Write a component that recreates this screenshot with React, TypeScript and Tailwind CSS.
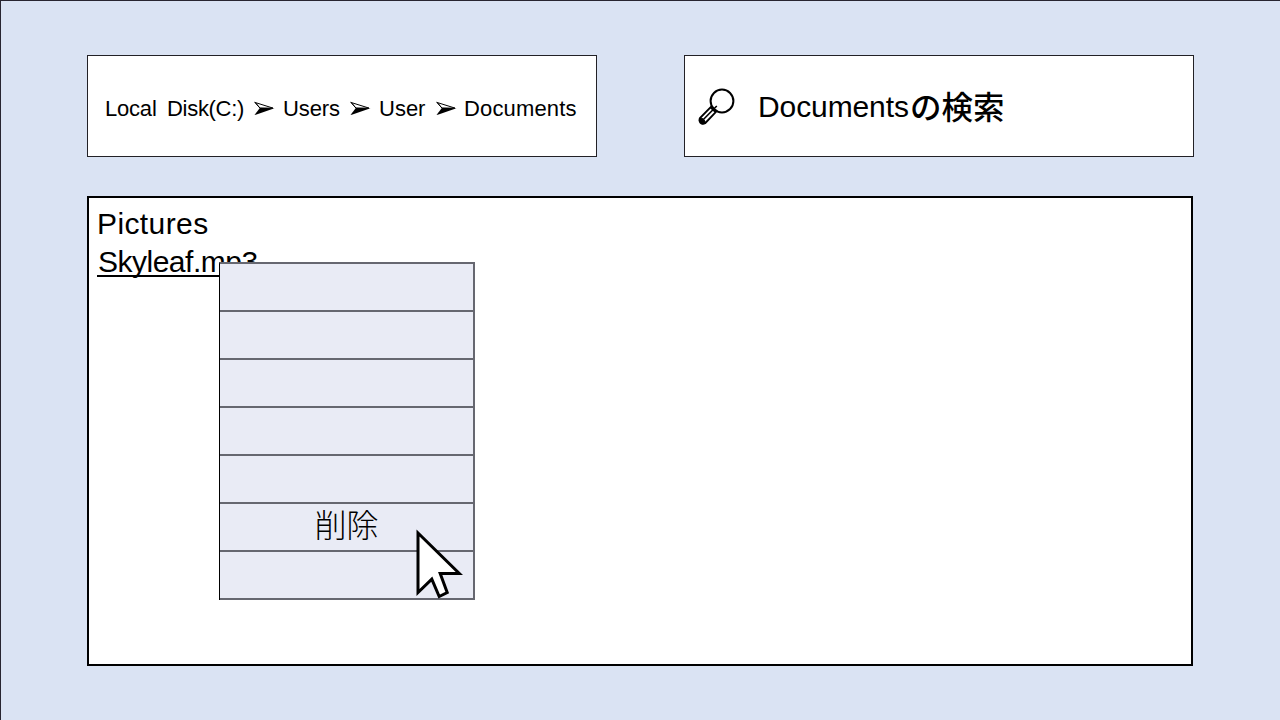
function Arrow() {
  return (
    <svg className="-mt-px h-[15px] w-[21px] shrink-0" viewBox="0 0 21 15" aria-hidden="true">
      <path d="M1.2 1.5 19 7.1 6 7.1Z" fill="white" stroke="black" strokeWidth="1" />
      <path d="M20.5 7.2 6 6.8 0.5 14 2.5 13.5Z" fill="black" />
      <path d="M0.5 0.8 6 7.2" stroke="black" />
    </svg>
  );
}

function SearchIcon() {
  return (
    <svg className="mt-px h-[38px] w-[38px] shrink-0" viewBox="0 0 38 38" fill="none" stroke="black" aria-hidden="true">
      <circle cx="24" cy="13" r="11.4" strokeWidth="2" />
      <path d="M13.2 18.6 2.2 29.8Q.8 32 2.3 34.5Q4.3 36.6 7.2 35.2L18 23.8Z" fill="white" strokeWidth="1.9" />
      <path d="M1.8 30Q6.7 30.2 7.4 35Q4.6 37 2.4 34.7Q.6 32.5 1.8 30Z" fill="black" />
      <path d="M14.5 22.2 5.4 31.5M16 20.8l2.8-2.8M12.6 19.6l4.6 4.2" strokeWidth="1.6" />
    </svg>
  );
}

function Cursor() {
  return (
    <svg className="absolute left-[193px] top-[261px] h-[76px] w-[52px]" viewBox="0 0 52 76" aria-hidden="true">
      <path
        d="M5 8 L5 67.5 L18.8 54.2 L26.2 71.5 L34.2 67.6 L27.2 48.5 L46.3 48.5 Z"
        fill="white"
        stroke="black"
        strokeWidth="3"
      />
    </svg>
  );
}

const menuItems = ["", "", "", "", "", "削除", ""];

export default function App() {
  return (
    <main className="flex h-[720px] w-[1280px] flex-col overflow-hidden border-l border-t border-[#282530] bg-[#dae3f3] pl-[86px] pt-[54px] font-['Liberation_Sans','Noto_Sans_CJK_JP',sans-serif] text-black">
      <header className="flex gap-[87px]">
        <nav className="flex h-[102px] w-[510px] items-center whitespace-pre border border-[#222126] bg-white pl-[17px] pt-1.5 text-[22px] leading-8">
          <span className="w-[62px] tracking-[-0.2px]">Local</span>
          <span className="w-[87px] tracking-[-0.3px]">Disk(C:)</span>
          <Arrow />
          <span className="ml-2 w-[67px] tracking-[-0.1px]">Users</span>
          <Arrow />
          <span className="ml-2 w-[57px]">User</span>
          <Arrow />
          <span className="ml-[7px] tracking-[0.15px]">Documents</span>
        </nav>
        <div className="flex h-[102px] w-[510px] items-center border border-[#222126] bg-white pl-[13px]">
          <SearchIcon />
          <span className="ml-[22px] flex items-center whitespace-nowrap text-[30px] leading-10">
            <span className="mt-0.5 w-[152px] tracking-[-0.1px]">Documents</span>
            <span className="-mt-0.5 font-['Noto_Sans_CJK_JP_Medium','Noto_Sans_CJK_JP',sans-serif] text-[31.5px] font-medium">の検索</span>
          </span>
        </div>
      </header>
      <section className="relative mt-[39px] h-[470px] w-[1106px] border-2 border-black bg-white pl-2 pt-[7px] text-[30px] leading-[38px]">
        <p className="tracking-[0.4px]">Pictures</p>
        <p className="w-[161px] tracking-[-0.5px]">
          <span className="block h-[34px] border-b-2 border-black pl-px">Skyleaf.mp3</span>
        </p>
        <div className="absolute left-[130px] top-[64px] w-[256px] border-l border-r-2 border-t-2 border-l-black border-r-[#666770] border-t-[#666770] bg-[#e9ebf5]">
          {menuItems.map((label, index) => (
            <div
              key={index}
              className="flex h-12 items-center justify-center border-b-2 border-[#666770] pb-2 font-['Noto_Sans_CJK_JP_Light','Noto_Sans_CJK_JP',sans-serif] text-[32px] font-light leading-none"
            >
              {label}
            </div>
          ))}
          <Cursor />
        </div>
      </section>
    </main>
  );
}
